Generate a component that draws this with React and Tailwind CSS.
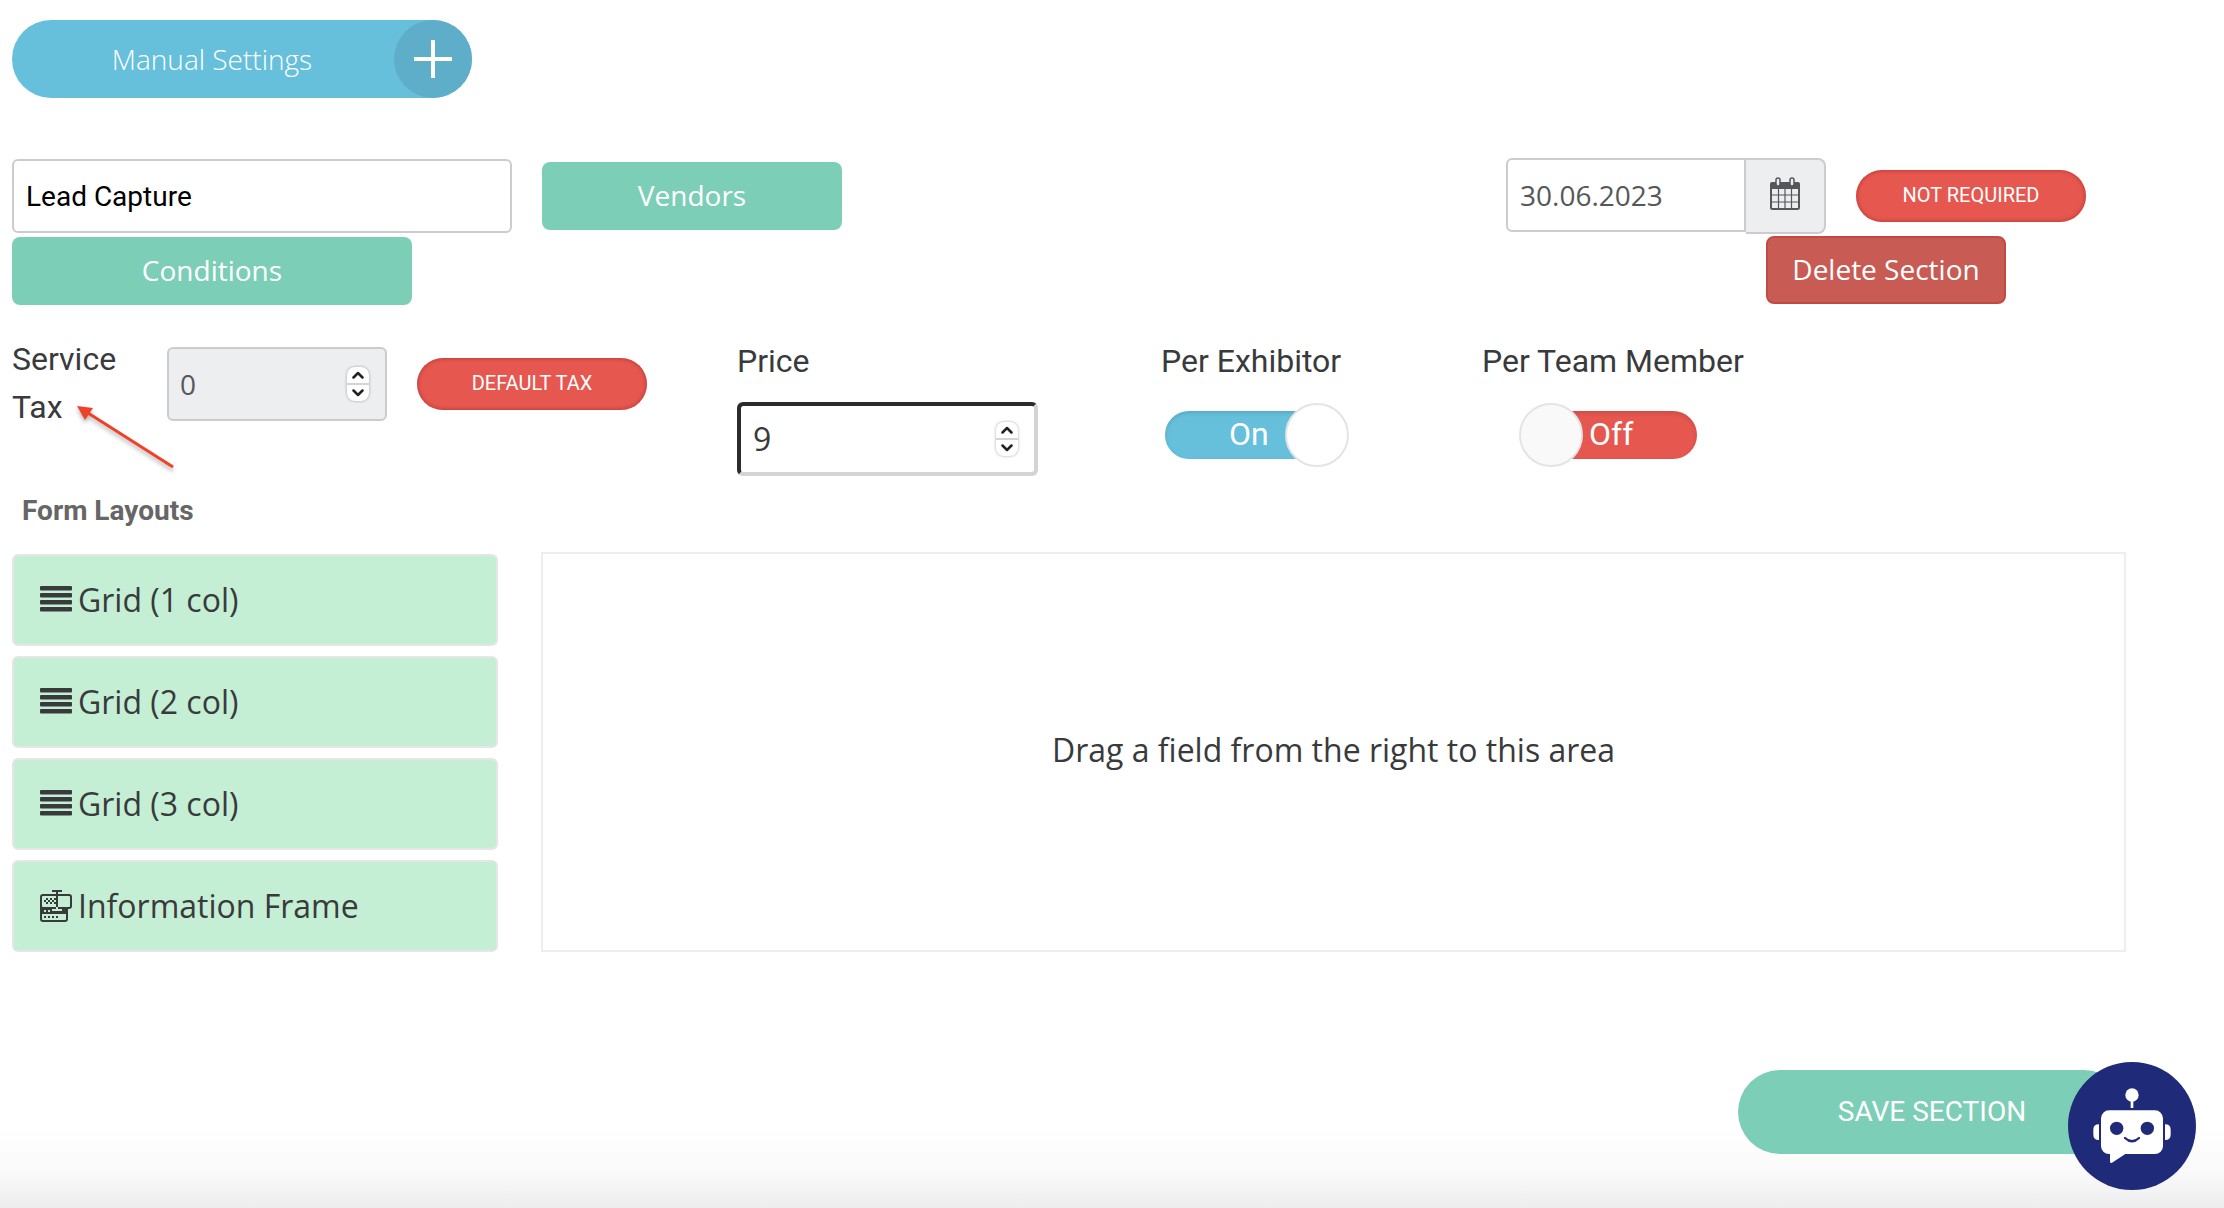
import { useState } from 'react';

const layouts = [
  { id: 1, label: 'Grid (1 col)', icon: 'bars' },
  { id: 2, label: 'Grid (2 col)', icon: 'bars' },
  { id: 3, label: 'Grid (3 col)', icon: 'bars' },
  { id: 4, label: 'Information Frame', icon: 'frame' },
];

function BarsIcon() {
  return (
    <svg className="w-8 h-8 shrink-0" viewBox="0 0 32 32" fill="#393a3c" aria-hidden="true">
      <rect x="0" y="2" width="32" height="4.4" rx="1" />
      <rect x="0" y="9" width="32" height="4.4" rx="1" />
      <rect x="0" y="16" width="32" height="4.4" rx="1" />
      <rect x="0" y="23" width="32" height="4.4" rx="1" />
    </svg>
  );
}

function FrameIcon() {
  return (
    <svg className="w-8 h-8 shrink-0" viewBox="0 0 32 32" fill="none" stroke="#393a3c" strokeWidth="2" aria-hidden="true">
      <rect x="1" y="5" width="30" height="13" rx="2" />
      <path d="M1 16v13a2 2 0 0 0 2 2h22a2 2 0 0 0 2-2V18" />
      <path fill="#393a3c" stroke="none" d="M0 17h28v7H0z" />
      <path d="M12 1h10M17 1v17" />
      <path stroke="#c5efd5" d="M12 20h10M17 17v2" />
      <path stroke="#c5efd5" strokeDasharray="2 2" d="M4 21h6" />
      <path strokeDasharray="2 2" d="M6 9h10M4 11h12M6 13h10" />
      <path strokeDasharray="2 2" d="M4 27h14" />
    </svg>
  );
}

function CalendarIcon() {
  return (
    <svg className="w-[30px] h-[34px]" viewBox="0 0 30 34" aria-hidden="true">
      <rect x="1" y="7" width="28" height="25" rx="1.500" fill="#edeef0" stroke="#55585a" strokeWidth="2" />
      <path d="M0 12V7a2 2 0 0 1 2-2h26a2 2 0 0 1 2 2v5z" fill="#55585a" />
      <path d="M8.500 12v20M15 12v20M21.500 12v20M1 18h28M1 25h28" stroke="#55585a" strokeWidth="1.200" />
      <rect x="6" y="1" width="4" height="8" rx="2" fill="#edeef0" stroke="#55585a" strokeWidth="1.500" />
      <rect x="20" y="1" width="4" height="8" rx="2" fill="#edeef0" stroke="#55585a" strokeWidth="1.500" />
    </svg>
  );
}

function RobotIcon() {
  return (
    <svg className="w-full h-full" viewBox="0 0 384 384" fill="#fff" aria-hidden="true">
      <circle cx="192" cy="99" r="20" />
      <path d="M188 112h8v26h-8z" />
      <path d="M123 145h138a24 24 0 0 1 24 24v83a24 24 0 0 1-24 24h-89l-40 26q-6 3-6-4v-22h-3a24 24 0 0 1-24-24v-83a24 24 0 0 1 24-24z" />
      <path d="M93 187v47q-17 0-17-16v-15q0-16 17-16zM291 187v47q17 0 17-16v-15q0-16-17-16z" />
      <circle cx="146" cy="199" r="20" fill="#1f2a78" />
      <circle cx="238" cy="199" r="20" fill="#1f2a78" />
      <path d="M171 228q21 20 42 0" fill="none" stroke="#1f2a78" strokeWidth="7" strokeLinecap="round" />
    </svg>
  );
}

// Up / down stepper shown at the right of number inputs
function Stepper({ onStep, disabled }) {
  return (
    <div className="flex flex-col w-[22px] h-[34px] shrink-0 rounded-lg bg-white shadow-[0_0_3px_rgba(0,0,0,0.35)] overflow-hidden">
      <button type="button" aria-label="Increase" disabled={disabled} onClick={() => onStep(1)} className="flex-1 flex items-center justify-center border-b border-[#d4d4d4]">
        <svg className="w-3 h-2" viewBox="0 0 12 8" fill="none" stroke="#222" strokeWidth="2.500" strokeLinecap="round" strokeLinejoin="round"><path d="M1.500 6.500 6 2l4.500 4.500" /></svg>
      </button>
      <button type="button" aria-label="Decrease" disabled={disabled} onClick={() => onStep(-1)} className="flex-1 flex items-center justify-center border-t border-[#d4d4d4]">
        <svg className="w-3 h-2" viewBox="0 0 12 8" fill="none" stroke="#222" strokeWidth="2.500" strokeLinecap="round" strokeLinejoin="round"><path d="M1.500 1.500 6 6l4.500-4.500" /></svg>
      </button>
    </div>
  );
}

function Toggle({ id, checked, onChange }) {
  return (
    <label htmlFor={id} className="relative flex items-center w-[184px] h-16 cursor-pointer">
      <input id={id} type="checkbox" role="switch" checked={checked} onChange={onChange} className="sr-only" />
      {checked ? (
        <>
          <span className="flex-1 h-12 mr-4 pl-16 rounded-full bg-[#66c0db] text-white text-[32px] leading-[46px] shadow-[inset_0_2px_4px_rgba(0,0,0,0.12)]">On</span>
          <span className="absolute right-0 top-0 w-16 h-16 rounded-full bg-white border-2 border-[#e4e4e4]"></span>
        </>
      ) : (
        <>
          <span className="w-[162px] h-12 ml-4 pl-[54px] rounded-full bg-[#e5574f] text-white text-[32px] leading-[46px] shadow-[inset_0_2px_4px_rgba(0,0,0,0.12)]">Off</span>
          <span className="absolute left-0 top-0 w-16 h-16 rounded-full bg-[#f9f9f9] border-2 border-[#e4e4e4]"></span>
        </>
      )}
    </label>
  );
}

export default function App() {
  const [name, setName] = useState('Lead Capture');
  const [date, setDate] = useState('30.06.2023');
  const [price, setPrice] = useState(9);
  const [perExhibitor, setPerExhibitor] = useState(true);
  const [perMember, setPerMember] = useState(false);

  return (
    <div className="relative min-h-screen pt-5 pl-3 pr-[98px] pb-[53px] bg-[linear-gradient(to_top,#ededed,#fafafa_36px,#ffffff_80px)] font-['Roboto',sans-serif] text-[#393a3c]">
      <button type="button" className="flex items-center w-[460px] h-[78px] rounded-full bg-[#66c0db] text-white">
        <span className="flex-1 pl-[18px] font-['Open_Sans',sans-serif] font-light text-[28px]">Manual Settings</span>
        <span className="flex items-center justify-center w-[78px] h-[78px] rounded-full bg-[#5eaeca]">
          <svg className="w-[38px] h-[38px]" viewBox="0 0 38 38" stroke="#fff" strokeWidth="4" aria-hidden="true"><path d="M19 0v38M0 19h38" /></svg>
        </span>
      </button>

      {/* Section header */}
      <div className="mt-[60px] flex justify-between pr-10 font-['Open_Sans',sans-serif] text-[28px]">
        <div className="flex flex-col gap-1 pt-px">
          <div className="flex items-center gap-[30px]">
            <input
              aria-label="Section name"
              value={name}
              onChange={(e) => setName(e.target.value)}
              className="w-[500px] h-[74px] px-3 border-2 border-[#ccc] rounded-md bg-white font-['Roboto',sans-serif] text-black"
            />
            <button type="button" className="w-[300px] h-[68px] rounded-lg bg-[#7dceb6] text-white leading-9 pb-[2px]">Vendors</button>
          </div>
          <button type="button" className="w-[400px] h-[68px] rounded-lg bg-[#7dceb6] text-white leading-9 pb-[2px]">Conditions</button>
        </div>

        <div className="flex flex-col gap-[2px]">
          <div className="flex items-center gap-[30px]">
            <div className="flex items-start">
              <input
                aria-label="Date"
                value={date}
                onChange={(e) => setDate(e.target.value)}
                className="w-[240px] h-[74px] px-3 border-2 border-[#ccc] rounded-l-md bg-white text-[#55585a]"
              />
              <button type="button" aria-label="Open calendar" className="flex items-center justify-center w-20 h-[76px] pb-1 border-2 border-l-0 border-[#ccc] rounded-r-lg bg-[#edeef0]">
                <CalendarIcon />
              </button>
            </div>
            <button type="button" className="w-[230px] h-[52px] pb-[2px] rounded-full bg-[#e5574f] text-white font-['Roboto',sans-serif] text-xl shadow-[inset_0_0_4px_rgba(150,20,20,0.6)]">NOT REQUIRED</button>
          </div>
          <button type="button" className="self-end w-[240px] h-[68px] mr-20 pb-[2px] rounded-lg border-2 border-[#c34a43] bg-[#c85c55] text-white leading-9">Delete Section</button>
        </div>
      </div>

      {/* Pricing */}
      <div className="mt-[30px] grid grid-cols-[725fr_424fr_321fr_644fr] text-[32px] leading-[48px]">
        <div className="relative flex items-start">
          <label htmlFor="tax" className="w-[125px] mr-[30px]">Service<br />Tax</label>
          <div className="mt-3 mr-[30px] flex items-center w-[220px] h-[74px] pl-[11px] pr-4 border-2 border-[#ccc] rounded-md bg-[#edeef0]">
            <input id="tax" type="number" value={0} disabled className="flex-1 min-w-0 [appearance:textfield] font-['Open_Sans',sans-serif] text-[28px] text-[#55585a]" />
            <Stepper disabled onStep={() => {}} />
          </div>
          <button type="button" className="mt-[23px] w-[230px] h-[52px] pb-[2px] rounded-full bg-[#e5574f] text-white text-xl shadow-[inset_0_0_4px_rgba(150,20,20,0.6)]">DEFAULT TAX</button>
          {/* Pointer to the tax label */}
          <svg className="absolute left-16 top-[70px] w-[104px] h-[72px] drop-shadow-[0_3px_2px_rgba(0,0,0,0.3)]" viewBox="0 0 104 72" aria-hidden="true">
            <path d="M12 8 97 62" stroke="#ee4128" strokeWidth="3" />
            <path d="M1 1 17 3 9 15z" fill="#ee4128" />
          </svg>
        </div>

        <div className="pt-[2px]">
          <label htmlFor="price">Price</label>
          <div className="mt-[17px] flex items-center w-[301px] h-[74px] pl-3 pr-4 rounded-md border-4 border-t-[#2b2b2b] border-l-[#2b2b2b] border-r-[#d4d4d4] border-b-[#d4d4d4] bg-white">
            <input id="price" type="number" value={price} onChange={(e) => setPrice(e.target.value)} className="flex-1 min-w-0 outline-none [appearance:textfield] font-['Open_Sans',sans-serif]" />
            <Stepper onStep={(n) => setPrice(Number(price) + n)} />
          </div>
        </div>

        <div className="pt-[2px]">
          <label htmlFor="per-exhibitor">Per Exhibitor</label>
          <div className="pt-[18px] pl-1">
            <Toggle id="per-exhibitor" checked={perExhibitor} onChange={() => setPerExhibitor(!perExhibitor)} />
          </div>
        </div>

        <div className="pt-[2px]">
          <label htmlFor="per-member">Per Team Member</label>
          <div className="pt-[18px] pl-[37px]">
            <Toggle id="per-member" checked={perMember} onChange={() => setPerMember(!perMember)} />
          </div>
        </div>
      </div>

      {/* Form builder */}
      <h2 className="mt-[15px] pl-[10px] text-[28px] leading-10 font-bold text-[#666]">Form Layouts</h2>
      <div className="mt-[21px] grid grid-cols-[486px_1fr] gap-[43px] font-['Open_Sans',sans-serif] text-[32px]">
        <ul className="flex flex-col gap-[10px] pt-[2px]">
          {layouts.map((item) => (
            <li key={item.id} className="flex items-center gap-[6px] h-[92px] px-[26px] border-2 border-[#e6e6e6] rounded-md bg-[#c5efd5]">
              {item.icon === 'bars' ? <BarsIcon /> : <FrameIcon />}
              {item.label}
            </li>
          ))}
        </ul>
        <div className="flex items-center justify-center pb-1 border-2 border-[#eee] bg-white">
          <p>Drag a field from the right to this area</p>
        </div>
      </div>

      <div className="mt-[118px] flex justify-end">
        <button type="button" className="w-[388px] h-[84px] rounded-full bg-[#7dceb6] text-white text-[28px]">SAVE SECTION</button>
      </div>

      <button type="button" aria-label="Open chat" className="absolute right-7 bottom-[18px] w-32 h-32 rounded-full bg-[#1f2a78]">
        <RobotIcon />
      </button>
    </div>
  );
}
